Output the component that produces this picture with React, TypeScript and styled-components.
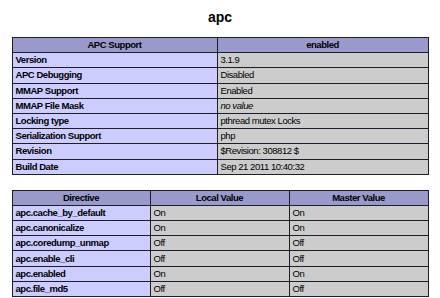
import React from 'react'
import styled, { createGlobalStyle } from 'styled-components'

const GlobalStyle = createGlobalStyle`
	body {
		margin: 0;
		background: #ffffff;
		color: #000000;
		font-family: 'Liberation Sans', Arial, sans-serif;
	}
`

const supportRows: [string, React.ReactNode][] = [
	['Version', '3.1.9'],
	['APC Debugging', 'Disabled'],
	['MMAP Support', 'Enabled'],
	['MMAP File Mask', <i>no value</i>],
	['Locking type', 'pthread mutex Locks'],
	['Serialization Support', 'php'],
	['Revision', '$Revision: 308812 $'],
	['Build Date', 'Sep 21 2011 10:40:32']
]

const directives: [string, string, string][] = [
	['apc.cache_by_default', 'On', 'On'],
	['apc.canonicalize', 'On', 'On'],
	['apc.coredump_unmap', 'Off', 'Off'],
	['apc.enable_cli', 'Off', 'Off'],
	['apc.enabled', 'On', 'On'],
	['apc.file_md5', 'Off', 'Off']
]

const Page = styled.div`
	width: 440px;
	overflow: hidden;
`

const Title = styled.h1`
	margin: 0;
	padding: 8px 0 11px;
	font-size: 14px;
	line-height: 18px;
	font-weight: bold;
	text-align: center;
`

const InfoTable = styled.table<{ $gap?: number }>`
	width: 417px;
	margin: 0 auto ${(p) => p.$gap ?? 0}px;
	border-collapse: collapse;
	table-layout: fixed;
	font-size: 9.5px;
	letter-spacing: -0.45px;
`

const Cell = styled.td`
	box-sizing: border-box;
	border: 1px solid #1e1e2a;
	height: 15.2px;
	padding: 0 3px;
	line-height: 14px;
	white-space: nowrap;
	overflow: hidden;
	vertical-align: middle;
`

const HeadCell = styled(Cell).attrs({ as: 'th' })<{ $w?: number }>`
	background: #9999cc;
	font-weight: bold;
	text-align: center;
	width: ${(p) => (p.$w ? `${p.$w}px` : 'auto')};
`

const KeyCell = styled(Cell)`
	background: #ccccff;
	font-weight: bold;
`

const ValueCell = styled(Cell)`
	background: #cccccc;
`

export default function App() {
	return (
		<Page>
			<GlobalStyle />
			<Title>apc</Title>
			<InfoTable $gap={15}>
				<thead>
					<tr>
						<HeadCell $w={205}>APC Support</HeadCell>
						<HeadCell>enabled</HeadCell>
					</tr>
				</thead>
				<tbody>
					{supportRows.map(([key, value]) => (
						<tr key={key}>
							<KeyCell>{key}</KeyCell>
							<ValueCell>{value}</ValueCell>
						</tr>
					))}
				</tbody>
			</InfoTable>
			<InfoTable>
				<thead>
					<tr>
						<HeadCell $w={138}>Directive</HeadCell>
						<HeadCell $w={139}>Local Value</HeadCell>
						<HeadCell>Master Value</HeadCell>
					</tr>
				</thead>
				<tbody>
					{directives.map(([name, local, master]) => (
						<tr key={name}>
							<KeyCell>{name}</KeyCell>
							<ValueCell>{local}</ValueCell>
							<ValueCell>{master}</ValueCell>
						</tr>
					))}
				</tbody>
			</InfoTable>
		</Page>
	)
}
